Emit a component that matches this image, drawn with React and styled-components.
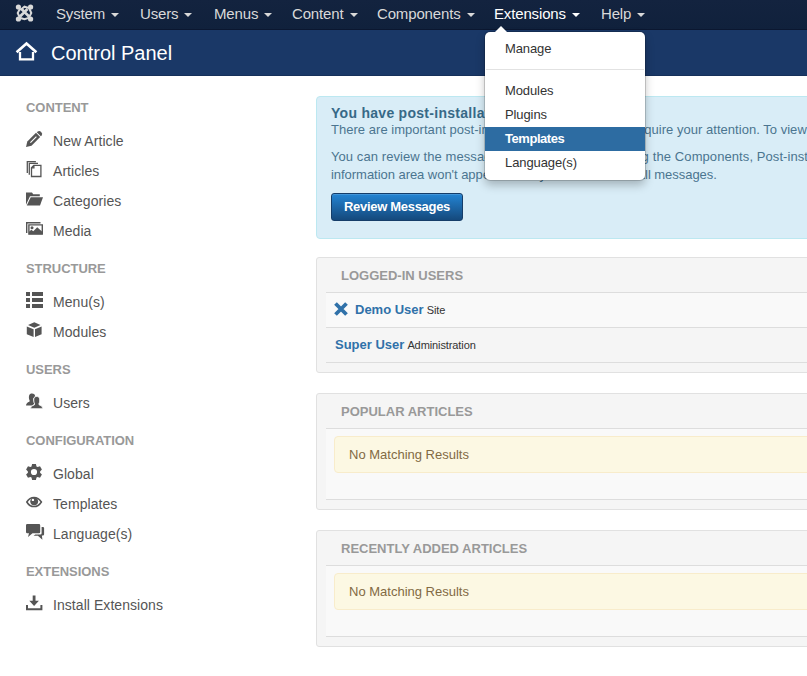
import React from "react";
import styled, { createGlobalStyle } from "styled-components";

const Global = createGlobalStyle`
  body { margin: 0; background: #fff; overflow: hidden; }
  * { box-sizing: border-box; }
`;

const Page = styled.div`
  width: 100%;
  height: 676px;
  overflow: hidden;
  font: 13px/18px "Liberation Sans", Arial, sans-serif;
  color: #333;
`;

const Navbar = styled.nav`
  display: flex;
  height: 30px;
  padding-left: 15px;
  background: linear-gradient(#13233f, #10213c);
  border-bottom: 1px solid #0b1730;
`;

const Brand = styled.div`
  width: 41px;
  padding-top: 4px;
  svg { display: block; }
`;

const NavMenu = styled.ul`
  display: grid;
  grid-template-columns: 84px 74px 78px 85px 117px 107px auto;
  margin: 0;
  padding: 0;
  list-style: none;
`;

const NavItem = styled.li`
  position: relative;
  display: flex;
  align-items: center;
  height: 28px;
  gap: 6px;
  font-size: 15px;
  letter-spacing: -0.15px;
  color: ${(p) => (p.$active ? "#fff" : "#d9d9d9")};
  white-space: nowrap;
`;

const Caret = styled.span`
  margin-top: 2px;
  border: 4px solid transparent;
  border-top-color: currentColor;
  border-bottom: 0;
`;

const Dropdown = styled.ul`
  position: absolute;
  z-index: 5;
  top: 32px;
  left: -9px;
  width: 160px;
  height: 148px;
  margin: 0;
  padding: 5px 0;
  list-style: none;
  background: #fff;
  border-radius: 5px;
  box-shadow: 0 0 0 1px rgba(0, 0, 0, 0.16), 0 5px 10px rgba(0, 0, 0, 0.25);
  &::before {
    content: "";
    position: absolute;
    top: -6px;
    left: 10px;
    border: 6px solid transparent;
    border-top: 0;
    border-bottom-color: #fff;
  }
`;

const DropdownItem = styled.li`
  height: 24px;
  padding-left: 20px;
  font-size: 13px;
  line-height: 23px;
  letter-spacing: ${(p) => (p.$active ? "-0.45px" : "-0.1px")};
  font-weight: ${(p) => (p.$active ? "bold" : "normal")};
  color: ${(p) => (p.$active ? "#fff" : "#333")};
  background: ${(p) => (p.$active ? "#2d6ca2" : "transparent")};
`;

const Divider = styled.li`
  height: 1px;
  margin: 8px 1px 9px;
  background: #e2e2e2;
`;

const Header = styled.header`
  display: flex;
  align-items: center;
  height: 46px;
  padding-left: 15px;
  gap: 13px;
  background: #1a3867;
  border-bottom: 1px solid #16305a;
  color: #fff;
  svg { margin-top: -3px; }
`;

const Title = styled.h1`
  margin: 0;
  font-size: 20px;
  font-weight: normal;
  line-height: 24px;
`;

const Body = styled.div`
  display: flex;
`;

const Sidebar = styled.aside`
  flex: 0 0 316px;
  padding: 9px 0 0 26px;
`;

const SideHeading = styled.h2`
  height: 41px;
  margin: 0;
  padding-top: 14px;
  font-size: 13px;
  line-height: 18px;
  letter-spacing: -0.05px;
  color: #999;
  text-transform: uppercase;
`;

const SideLink = styled.a`
  display: flex;
  align-items: center;
  height: 30px;
  gap: 9px;
  font-size: 14px;
  letter-spacing: 0.06px;
  color: #555;
  svg { flex: none; margin-top: -4px; overflow: visible; }
`;

const Main = styled.main`
  flex: 0 0 720px;
  padding-top: 20px;
`;

const Notice = styled.section`
  height: 143px;
  margin-bottom: 18px;
  padding: 8px 14px;
  border: 1px solid #bce8f1;
  border-radius: 4px;
  background: #d9edf7;
  color: #4b7590;
  white-space: nowrap;
`;

const NoticeTitle = styled.h4`
  margin: 0;
  font-size: 14px;
  line-height: 16px;
  letter-spacing: 0.28px;
  color: #376987;
`;

const NoticeText = styled.p`
  margin: 0 0 ${(p) => p.$gap || 0}px;
  line-height: 18px;
  letter-spacing: ${(p) => p.$track || 0}px;
`;

const Loose = styled.span`
  letter-spacing: 0.49px;
`;

const Button = styled.button`
  display: block;
  width: 132px;
  height: 28px;
  padding: 0 0 1px;
  border: 1px solid #153d69;
  border-radius: 3px;
  background: linear-gradient(#2384d3, #15497c);
  box-shadow: inset 0 1px 0 rgba(255, 255, 255, 0.15);
  color: #fff;
  font: bold 13px/18px "Liberation Sans", Arial, sans-serif;
  letter-spacing: -0.3px;
`;

const Well = styled.section`
  height: ${(p) => p.$height}px;
  margin-bottom: 20px;
  padding: 0 0 0 9px;
  border: 1px solid #e1e1e1;
  border-radius: 3px;
  background: #f5f5f5;
`;

const WellTitle = styled.h2`
  height: 34px;
  margin: 0;
  padding: 1px 0 0 15px;
  font-size: 13px;
  line-height: 34px;
  color: #999;
  text-transform: uppercase;
`;

const Row = styled.div`
  display: flex;
  align-items: center;
  height: 35px;
  padding-left: 9px;
  border-top: 1px solid #ddd;
  background: ${(p) => (p.$striped ? "#f9f9f9" : "transparent")};
  ${(p) => p.$last && "height: 36px; border-bottom: 1px solid #ddd;"}
  svg { margin: -3px 7px 0 -1px; }
`;

const UserName = styled.strong`
  margin-right: 3px;
  color: #3071a9;
`;

const Role = styled.small`
  font-size: 11px;
  letter-spacing: -0.1px;
`;

const Results = styled.div`
  height: 72px;
  padding: 7px 0 0 8px;
  border: solid #ddd;
  border-width: 1px 0;
  background: #f9f9f9;
`;

const Empty = styled.div`
  height: 37px;
  padding-left: 14px;
  border: 1px solid #f8eccb;
  border-radius: 4px;
  background: #fcf8e3;
  color: #826a43;
  line-height: 35px;
`;

const ICONS = {
  pencil: (
    <>
      <path d="M0 16l1.300-5.500L10 1.800l4.200 4.100L5.500 14.700z" />
      <path d="M10.800 1.200l.9-.8q1.800-1.200 3.500.5t.5 3.500l-.8.900z" />
      <path d="M4.400 11.600l6-6" stroke="#fff" strokeWidth="1.100" />
    </>
  ),
  copy: (
    <g fill="none" stroke="currentColor" strokeWidth="1.300">
      <path d="M1.300 12V.7h8.600M3.300 13.700V2.400h8.700" />
      <path d="M5.500 6.700l2.300-2.400h7.100v11.200H5.500zM5.500 6.900h2.400V4.500" fill="#fff" />
    </g>
  ),
  folder: (
    <>
      <path d="M0 1.500h6l1.200 1.800h6.600v2H4L0 13.800z" />
      <path d="M4.700 6.200H17l-3 8.300H.8z" />
    </>
  ),
  media: (
    <>
      <path d="M.7 12V1.700h13.800M2.900 3.900h13.400v9.200H2.900z" fill="none" stroke="currentColor" strokeWidth="1.400" />
      <circle cx="6" cy="6.700" r="1.500" />
      <path d="M3 13.300v-2.500l2.300-2 2 1.500 3.900-4.100L16 10.400v2.900z" />
    </>
  ),
  list: <path d="M0 0h4v4H0zM6 0h11v4H6zM0 6h4v4H0zM6 6h11v4H6zM0 12h4v4H0zM6 12h11v4H6z" />,
  cube: <path d="M8.300 .3l6.200 2.800-6.200 2.700L2 3.100zM.8 4.400l6.800 2.800v7.800L.8 12.200zM15.600 4.400L9 7.200v7.800l6.600-2.800z" />,
  users: (
    <>
      <path d="M0 12.600q.2-3 3.400-3.900.7-.7-.2-2.200C2.500 3.200 3 .5 6 .5c2 0 3 1 3.100 2.600L7 6l1.200 5L6 12.600z" />
      <path
        d="M4.500 15.700q0-3 3.800-3.800.8-.8-.2-2.400C7.300 6 7.800 3.500 10.700 3.500s3.400 2.500 2.700 6q-1 1.600-.2 2.400 3.600.8 3.600 3.800z"
        stroke="#fff"
        strokeWidth=".8"
      />
    </>
  ),
  gear: (
    <path
      fillRule="evenodd"
      d="M6.100 0h3.800l.6 2.500 1.100.6L14 2.300l1.900 3.300-1.800 1.800v1.300l1.800 1.700-1.900 3.300-2.400-.8-1.100.6-.6 2.500H6.100l-.6-2.500-1.100-.6-2.400.8L.1 10.400l1.800-1.700V7.400L.1 5.600 2 2.300l2.400.8 1.100-.6zM8 4.900a3.100 3.100 0 1 0 0 6.200 3.100 3.100 0 0 0 0-6.200z"
    />
  ),
  eye: (
    <>
      <path d="M.8 8Q3.500 3.400 8 3.400T15.400 8Q12.500 12.600 8 12.600T.8 8z" fill="none" stroke="currentColor" strokeWidth="1.500" />
      <circle cx="8.200" cy="7.300" r="3.900" />
      <circle cx="6.900" cy="5.900" r="1.200" fill="#fff" />
    </>
  ),
  comments: (
    <>
      <path d="M1.300 0h11.700q1.200 0 1.200 1.200v6.800Q14.200 9.300 13 9.300H6.500L2 12.900l1-3.600H1.300Q0 9.300 0 8V1.200Q0 0 1.300 0z" />
      <path d="M15.600 3h1.300q1.200 0 1.200 1.100v6.200q0 1.200-1.200 1.200h-1l.5 4.200-4.500-4H7.600l1.700-1.300h5q1.300 0 1.300-1.200z" />
    </>
  ),
  download: <path d="M6.700 .5h2.800v5.300h3.400L8.100 11 3.300 5.800h3.400zM0 10h2v3.300h12.400V10h2v5.300H0z" />,
};

function Icon({ name }) {
  return (
    <svg width="18" height="16" viewBox="0 0 18 16" fill="currentColor">
      {ICONS[name]}
    </svg>
  );
}

function JoomlaMark() {
  return (
    <svg width="19" height="18" viewBox="0 0 19 18" fill="none" stroke="#d9d9d9" strokeWidth="2.700">
      <path d="M5 12.500L12.500 5M14 12.500L6.500 5" />
      <path d="M6.500 5L9.500 2.700 14 4 14.500 5 16.300 9 14.500 12.500 13.500 14 9.500 15.300 5.500 14 4.500 13 2.700 9 4.500 5.500z" strokeWidth="2" />
      <g fill="#d9d9d9" stroke="none">
        <circle cx="3.400" cy="3" r="2.600" />
        <circle cx="15.600" cy="3" r="2.600" />
        <circle cx="3.400" cy="15" r="2.600" />
        <circle cx="15.600" cy="15" r="2.600" />
      </g>
    </svg>
  );
}

function HomeIcon() {
  return (
    <svg width="23" height="22" viewBox="0 0 23 22" fill="none" stroke="currentColor" strokeWidth="2.700">
      <path d="M1.600 12.200L11.500 3.600l9.900 8.600" />
      <path d="M5 12v7.400h13V12" strokeWidth="2.300" />
    </svg>
  );
}

const NAV = ["System", "Users", "Menus", "Content", "Components", "Extensions", "Help"];

const SECTIONS = [
  ["Content", [["pencil", "New Article"], ["copy", "Articles"], ["folder", "Categories"], ["media", "Media"]]],
  ["Structure", [["list", "Menu(s)"], ["cube", "Modules"]]],
  ["Users", [["users", "Users"]]],
  ["Configuration", [["gear", "Global"], ["eye", "Templates"], ["comments", "Language(s)"]]],
  ["Extensions", [["download", "Install Extensions"]]],
];

function ExtensionsMenu() {
  return (
    <Dropdown>
      <DropdownItem>Manage</DropdownItem>
      <Divider />
      <DropdownItem>Modules</DropdownItem>
      <DropdownItem>Plugins</DropdownItem>
      <DropdownItem $active>Templates</DropdownItem>
      <DropdownItem>Language(s)</DropdownItem>
    </Dropdown>
  );
}

export default function App() {
  return (
    <Page>
      <Global />
      <Navbar>
        <Brand>
          <JoomlaMark />
        </Brand>
        <NavMenu>
          {NAV.map((label) => (
            <NavItem key={label} $active={label === "Extensions"}>
              {label}
              <Caret />
              {label === "Extensions" && <ExtensionsMenu />}
            </NavItem>
          ))}
        </NavMenu>
      </Navbar>
      <Header>
        <HomeIcon />
        <Title>Control Panel</Title>
      </Header>
      <Body>
        <Sidebar>
          {SECTIONS.map(([title, links]) => (
            <div key={title}>
              <SideHeading>{title}</SideHeading>
              {links.map(([icon, label]) => (
                <SideLink key={label}>
                  <Icon name={icon} />
                  {label}
                </SideLink>
              ))}
            </div>
          ))}
        </Sidebar>
        <Main>
          <Notice>
            <NoticeTitle>You have post-installation messages</NoticeTitle>
            <NoticeText $gap={9} $track={0.033}>
              There are important post-installation messages that require your attention. To view those messages
            </NoticeText>
            <NoticeText $track={0.08}>
              You can review the messa<Loose>ges at any time by clicking</Loose> the Components, Post-installation Messages
            </NoticeText>
            <NoticeText $gap={9} $track={-0.04}>
              information area won't appear when you have hidden all messages.
            </NoticeText>
            <Button>Review Messages</Button>
          </Notice>
          <Well $height={116}>
            <WellTitle>Logged-in Users</WellTitle>
            <Row $striped>
              <svg width="14" height="14" viewBox="0 0 14 14" stroke="#3071a9" strokeWidth="3.800">
                <path d="M1.500 1.500l11 11M12.500 1.500l-11 11" />
              </svg>
              <UserName>Demo User</UserName>
              <Role>Site</Role>
            </Row>
            <Row $last>
              <UserName>Super User</UserName>
              <Role>Administration</Role>
            </Row>
          </Well>
          <Well $height={117}>
            <WellTitle>Popular Articles</WellTitle>
            <Results>
              <Empty>No Matching Results</Empty>
            </Results>
          </Well>
          <Well $height={117}>
            <WellTitle>Recently Added Articles</WellTitle>
            <Results>
              <Empty>No Matching Results</Empty>
            </Results>
          </Well>
        </Main>
      </Body>
    </Page>
  );
}
